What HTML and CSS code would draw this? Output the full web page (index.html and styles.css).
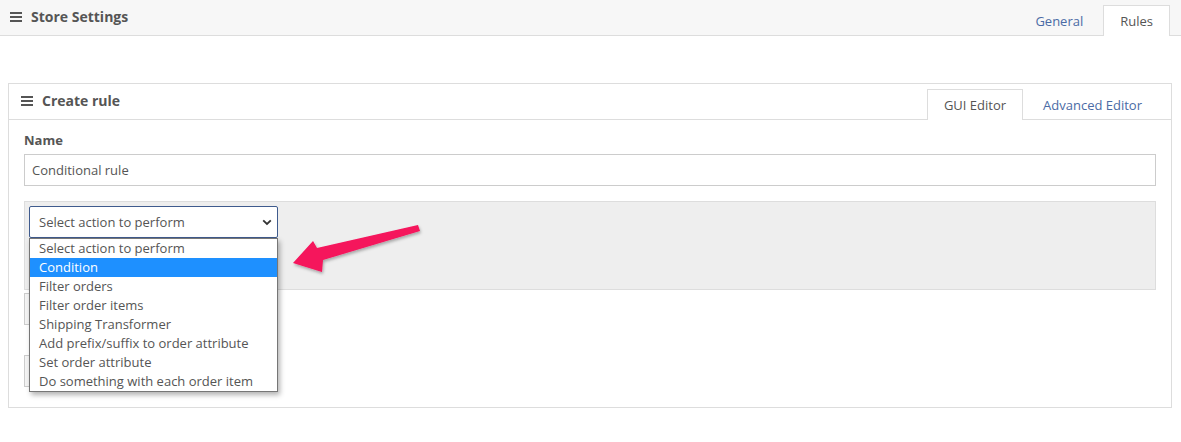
FILE: index.html
```html
<!DOCTYPE html>
<html>
<head>
<meta charset="utf-8">
<link rel="stylesheet" href="styles.css">
</head>
<body>
<div class="topbar">
  <div class="title">
    <svg class="burger" width="12" height="10" viewBox="0 0 12 10"><rect x="0" y="0" width="12" height="2" fill="#555"/><rect x="0" y="4" width="12" height="2" fill="#555"/><rect x="0" y="8" width="12" height="2" fill="#555"/></svg>
    <span>Store Settings</span>
  </div>
  <div class="tabs">
    <div class="tab">General</div>
    <div class="tab active">Rules</div>
  </div>
</div>
<div class="content">
  <div class="panel">
    <div class="panel-head">
      <div class="title">
        <svg class="burger" width="12" height="10" viewBox="0 0 12 10"><rect x="0" y="0" width="12" height="2" fill="#555"/><rect x="0" y="4" width="12" height="2" fill="#555"/><rect x="0" y="8" width="12" height="2" fill="#555"/></svg>
        <span>Create rule</span>
      </div>
      <div class="tabs ptabs">
        <div class="tab active">GUI Editor</div>
        <div class="tab">Advanced Editor</div>
      </div>
    </div>
    <div class="panel-body">
      <label class="lbl">Name</label>
      <div class="input">Conditional rule</div>
      <div class="actionbox">
        <div class="selectwrap">
          <div class="select">
            <span>Select action to perform</span>
            <svg width="10" height="7" viewBox="0 0 10 7"><path d="M1.2 1.3 L5 5 L8.8 1.3" fill="none" stroke="#333" stroke-width="1.8"/></svg>
          </div>
          <div class="dropdown">
            <div class="opt">Select action to perform</div>
            <div class="opt sel">Condition</div>
            <div class="opt">Filter orders</div>
            <div class="opt">Filter order items</div>
            <div class="opt">Shipping Transformer</div>
            <div class="opt">Add prefix/suffix to order attribute</div>
            <div class="opt">Set order attribute</div>
            <div class="opt">Do something with each order item</div>
          </div>
        </div>
      </div>
      <div class="btn"></div>
      <div class="btn second"></div>
    </div>
  </div>
  <svg class="arrow" width="140" height="60" viewBox="0 0 140 60">
    <defs><filter id="sh" x="-20%" y="-20%" width="140%" height="160%"><feDropShadow dx="1" dy="2" stdDeviation="1.5" flood-color="#000" flood-opacity="0.3"/></filter></defs>
    <polygon filter="url(#sh)" fill="#f5135c" points="3,44 23,22 27,29 128,6 130,12 33,41 32,53"/>
  </svg>
</div>
</body>
</html>
```
FILE: styles.css
```css
* { box-sizing: border-box; }
body {
  margin: 0;
  font-family: "Open Sans", "Liberation Sans", sans-serif;
  font-size: 13px;
  color: #555;
  background: #fff;
}
.topbar {
  height: 36px;
  background: #f7f7f7;
  border-bottom: 1px solid #ddd;
  display: flex;
  justify-content: space-between;
  align-items: flex-end;
  padding: 0 11px 0 10px;
}
.title {
  display: flex;
  align-items: center;
  gap: 9px;
  font-weight: bold;
  font-size: 14px;
  color: #555;
  align-self: stretch;
  padding-bottom: 2px;
}
.burger { display: block; }
.tabs {
  display: flex;
  gap: 3px;
  margin-bottom: -1px;
}
.tab {
  padding: 0 16px;
  height: 31px;
  line-height: 30px;
  color: #4a6ba5;
  border: 1px solid transparent;
  border-bottom: none;
}
.tab.active {
  background: #fff;
  border-color: #ddd;
  color: #555;
  height: 31px;
}
.topbar .tab:first-child { padding: 0 16px 0 18px; }
.content {
  position: relative;
  padding: 47px 9px 0 8px;
}
.panel {
  border: 1px solid #ddd;
}
.panel-head {
  height: 36px;
  border-bottom: 1px solid #ddd;
  display: flex;
  justify-content: space-between;
  align-items: flex-end;
  padding: 0 12px 0 12px;
}
.panel-head .title { padding-bottom: 2px; }
.ptabs .tab { padding: 0 16px; height: 31px; line-height: 30px; }
.ptabs .tab.active { padding: 0 16px; }
.panel-body {
  padding: 11px 15px 20px 15px;
}
.lbl {
  display: block;
  font-weight: bold;
  line-height: 18px;
  margin-bottom: 5px;
}
.input {
  height: 32px;
  border: 1px solid #ccc;
  padding: 0 7px;
  line-height: 30px;
  color: #555;
}
.actionbox {
  margin-top: 15px;
  height: 89px;
  background: #eee;
  border: 1px solid #ddd;
  padding: 4px;
}
.selectwrap {
  position: relative;
  width: 249px;
}
.select {
  height: 32px;
  border: 1px solid #3f5b8d;
  border-radius: 2px;
  background: #fff;
  display: flex;
  align-items: center;
  justify-content: space-between;
  padding: 0 5px 0 9px;
}
.dropdown {
  position: absolute;
  left: 0;
  top: 32px;
  width: 249px;
  background: #fff;
  border: 1px solid #767676;
  box-shadow: 2px 3px 5px rgba(0,0,0,0.3);
  z-index: 5;
}
.opt {
  height: 19px;
  line-height: 19px;
  padding-left: 9px;
  color: #555;
  white-space: nowrap;
}
.opt.sel {
  background: #1e90ff;
  color: #fff;
}
.btn {
  margin-top: 3px;
  width: 120px;
  height: 32px;
  border: 1px solid #ccc;
  background: #f4f4f4;
}
.btn.second { margin-top: 30px; }
.arrow {
  position: absolute;
  left: 290px;
  top: 183px;
  z-index: 6;
}
```
